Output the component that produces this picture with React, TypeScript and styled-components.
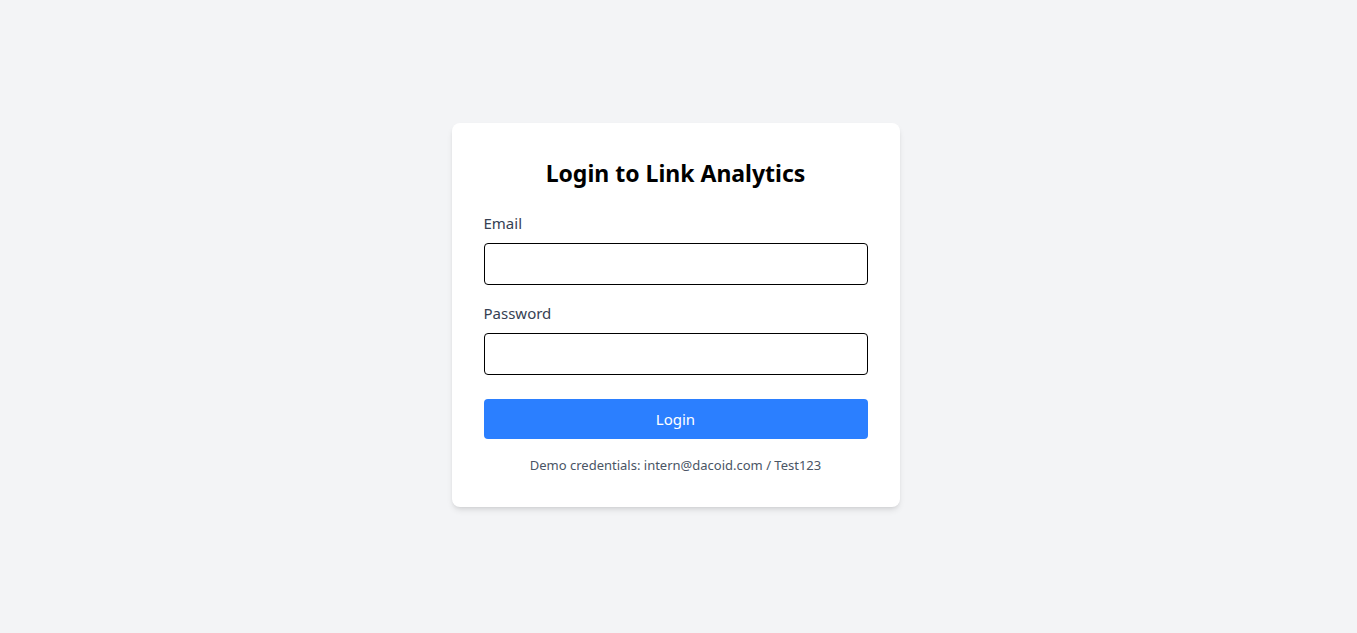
import styled, { createGlobalStyle } from 'styled-components';

const GlobalStyle = createGlobalStyle`
    html, body {
        margin: 0;
        padding: 0;
        background: #f3f4f6;
    }

    body {
        font-family: 'Noto Sans', 'Open Sans', Arial, sans-serif;
        color: #000;
    }

    * {
        box-sizing: border-box;
    }
`;

const Page = styled.main`
    min-height: 100vh;
    display: flex;
    align-items: center;
    justify-content: center;
    padding: 0 6px 4px 0;
`;

const Card = styled.div`
    width: 448px;
    background: #fff;
    border-radius: 8px;
    padding: 32px;
    box-shadow: 0 4px 6px -1px rgba(0, 0, 0, 0.1), 0 2px 4px -2px rgba(0, 0, 0, 0.1);
`;

const Title = styled.h2`
    margin: 2px 0 22px;
    font-size: 23px;
    line-height: 32px;
    font-weight: 700;
    text-align: center;
`;

const Field = styled.div<{ $last?: boolean }>`
    display: flex;
    flex-direction: column;
    margin-bottom: ${({ $last }) => ($last ? '24px' : '16px')};
`;

const Label = styled.label`
    font-size: 15px;
    line-height: 24px;
    color: #364153;
    margin-bottom: 8px;
`;

const Input = styled.input`
    width: 100%;
    height: 42px;
    padding: 8px 12px;
    border: 1px solid #000;
    border-radius: 4px;
    font: inherit;
    outline: none;
`;

const Button = styled.button`
    width: 100%;
    height: 40px;
    border: none;
    border-radius: 4px;
    background: #2b7fff;
    color: #fff;
    font-family: inherit;
    font-size: 15px;
    cursor: pointer;
`;

const Hint = styled.p`
    margin: 16px 0 0;
    font-size: 13px;
    line-height: 20px;
    color: #4a5565;
    text-align: center;
`;

const App = () => {
    return (
        <>
            <GlobalStyle />
            <Page>
                <Card>
                    <Title>Login to Link Analytics</Title>
                    <form onSubmit={(e) => e.preventDefault()}>
                        <Field>
                            <Label htmlFor="email">Email</Label>
                            <Input id="email" type="email" />
                        </Field>
                        <Field $last>
                            <Label htmlFor="password">Password</Label>
                            <Input id="password" type="password" />
                        </Field>
                        <Button type="submit">Login</Button>
                    </form>
                    <Hint>Demo credentials: intern@dacoid.com / Test123</Hint>
                </Card>
            </Page>
        </>
    );
};

export default App;
